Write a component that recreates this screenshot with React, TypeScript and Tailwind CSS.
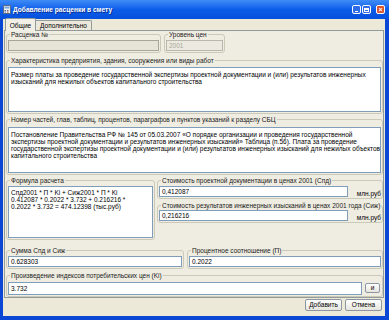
import type { ReactNode } from "react";

function Group({
  label,
  className = "",
  children,
}: {
  label: string;
  className?: string;
  children: ReactNode;
}) {
  return (
    <fieldset
      className={`min-w-0 border border-[#CBCAB8] rounded-[3px] px-px pb-px ${className}`}
    >
      <legend className="ml-[2px] px-px text-[6.5px] leading-[7px] text-[#1a1a1a] whitespace-nowrap">
        {label}
      </legend>
      {children}
    </fieldset>
  );
}

function Field({ value, className = "" }: { value: string; className?: string }) {
  return (
    <div
      className={`h-[11px] bg-white border border-[#7F9DB9] pl-[2px] text-[6.5px] leading-[9px] text-black whitespace-nowrap ${className}`}
    >
      {value}
    </div>
  );
}

function Memo({ lines, className = "" }: { lines: string[]; className?: string }) {
  return (
    <div
      className={`bg-white border border-[#7F9DB9] pl-[2px] text-[6.5px] leading-[7px] text-black ${className}`}
    >
      {lines.map((line) => (
        <div key={line} className="whitespace-nowrap">
          {line}
        </div>
      ))}
    </div>
  );
}

function XpButton({ label, className = "" }: { label: string; className?: string }) {
  return (
    <button
      className={`flex items-center justify-center rounded-[2px] border border-[#8C97A3] bg-gradient-to-b from-white to-[#E6E5DD] text-[6.5px] leading-[8px] text-black ${className}`}
    >
      {label}
    </button>
  );
}

export default function App() {
  return (
    <div className="w-[389px] h-[320px] flex flex-col bg-[#0A47D4] font-['Liberation_Sans',Arial,sans-serif]">
      {/* Title bar */}
      <div className="h-[19px] flex items-center bg-gradient-to-b from-[#3F8CF6] via-[#0C5CE9] to-[#0550DC] pl-[3px] pr-[4px]">
        <svg width="8" height="9" viewBox="0 0 8 9" className="shrink-0">
          <rect x="0.5" y="0.5" width="7" height="8" fill="#E8EEF8" stroke="#5A6E8C" />
          <rect x="1.5" y="1.5" width="5" height="2" fill="#7FA6D8" />
          <rect x="1.5" y="5" width="1.5" height="1" fill="#5A6E8C" />
          <rect x="4" y="5" width="1.5" height="1" fill="#5A6E8C" />
          <rect x="1.5" y="6.5" width="1.5" height="1" fill="#5A6E8C" />
          <rect x="4" y="6.5" width="1.5" height="1" fill="#C04020" />
        </svg>
        <span className="ml-[2px] text-white font-bold text-[6.6px] leading-[8px] whitespace-nowrap [text-shadow:1px_1px_0_#0A2E8A]">
          Добавление расценки в смету
        </span>
        <div className="ml-auto flex items-center">
          <div className="w-[9px] h-[9px] rounded-[2px] border border-white bg-[#2F6BE6] flex items-end justify-start pb-[1px] pl-[2px]">
            <div className="w-[3px] h-px bg-white" />
          </div>
          <div className="ml-[1px] w-[9px] h-[9px] rounded-[2px] border border-white bg-[#2F6BE6] flex items-center justify-center">
            <div className="w-[5px] h-[4px] border border-white border-t-2" />
          </div>
          <div className="ml-[5px] w-[9px] h-[9px] rounded-[2px] border border-white bg-[#D9532C] flex items-center justify-center text-white text-[7px] leading-[7px] font-bold">
            ×
          </div>
        </div>
      </div>

      {/* Window body */}
      <div className="flex-1 ml-[3px] mr-[4px] mb-[4px] bg-[#ECE9D8] flex flex-col">
        {/* Tabs */}
        <div className="h-[11px] flex items-end pl-[2px]">
          <div className="relative z-10 -mb-px h-[13px] w-[31px] border border-b-0 border-[#919B9C] rounded-t-[2px] bg-[#F1EFE6] flex items-center justify-center text-[6.5px] leading-[7px] text-black">
            Общие
          </div>
          <div className="h-[10px] w-[56px] border border-l-0 border-b-0 border-[#919B9C] rounded-tr-[2px] bg-[#ECE9DC] flex items-center justify-center text-[6.5px] leading-[7px] text-black">
            Дополнительно
          </div>
        </div>

        {/* Tab panel */}
        <div className="mx-[1px] h-[268px] border border-[#919B9C] bg-[#EFEDE2] pl-px flex flex-col">
          <div className="flex gap-[3px]">
            <Group label="Расценка №" className="w-[155px]">
              <div className="mt-[2px] h-[11px] border border-[#A7A69A] bg-[#E6E4D7]" />
            </Group>
            <Group label="Уровень цен" className="w-[61px]">
              <div className="mt-[2px] h-[11px] border border-[#B9B8AC] bg-[#ECEAE0] pl-[2px] text-[6.5px] leading-[9px] text-[#A9A79A]">
                2001
              </div>
            </Group>
          </div>

          <Group label="Характеристика предприятия, здания, сооружения или виды работ" className="mt-[4px] w-[377px]">
            <Memo
              className="mt-[3px] h-[45px] pt-[3px]"
              lines={[
                "Размер платы за проведение государственной экспертизы проектной документации и (или) результатов инженерных",
                "изысканий для нежилых объектов капитального строительства",
              ]}
            />
          </Group>

          <Group label="Номер частей, глав, таблиц, процентов, параграфов и пунктов указаний к разделу СБЦ" className="mt-[2px] w-[377px]">
            <Memo
              className="mt-[4px] h-[46px] pt-[3px]"
              lines={[
                "Постановление Правительства РФ № 145 от 05.03.2007 «О порядке организации и проведения государственной",
                "экспертизы проектной документации и результатов инженерных изысканий» Таблица (п.56). Плата за проведение",
                "государственной экспертизы проектной документации и (или) результатов инженерных изысканий для нежилых объектов",
                "капитального строительства",
              ]}
            />
          </Group>

          <div className="mt-[2px] flex gap-[2px] items-start">
            <Group label="Формула расчета" className="w-[149px]">
              <Memo
                className="mt-[2px] h-[52px] pt-[2px]"
                lines={[
                  "Спд2001 * П * Ki + Сиж2001 * П * Ki",
                  "0.412087 * 0.2022 * 3.732 + 0.216216 *",
                  "0.2022 * 3.732 = 474.12398 (тыс.руб)",
                ]}
              />
            </Group>
            <div className="flex flex-col">
              <Group label="Стоимость проектной документации в ценах 2001 (Спд)" className="w-[226px]">
                <div className="mt-[2px] flex items-end">
                  <Field value="0,412087" className="w-[189px]" />
                  <span className="ml-[9px] text-[6.5px] leading-[7px] text-black">млн.руб</span>
                </div>
              </Group>
              <Group label="Стоимость результатов инженерных изысканий в ценах 2001 года (Сиж)" className="mt-[3px] w-[226px]">
                <div className="mt-[1px] flex items-end">
                  <Field value="0,216216" className="w-[189px]" />
                  <span className="ml-[9px] text-[6.5px] leading-[7px] text-black">млн.руб</span>
                </div>
              </Group>
            </div>
          </div>

          <div className="mt-[7px] flex gap-[3px]">
            <Group label="Сумма Спд и Сиж" className="w-[178px]">
              <Field value="0.628303" className="mt-[2px]" />
            </Group>
            <Group label="Процентное соотношение (П)" className="w-[196px]">
              <Field value="0.2022" className="mt-[2px]" />
            </Group>
          </div>

          <Group label="Произведение индексов потребительских цен (Ki)" className="mt-[3px] w-[377px]">
            <div className="mt-[3px] flex items-start gap-[3px]">
              <Field value="3.732" className="w-[354px] h-[13px] leading-[11px]" />
              <XpButton label="и" className="mt-[1px] w-[15px] h-[10px] text-[#1a3a8a]" />
            </div>
          </Group>
        </div>

        {/* Dialog buttons */}
        <div className="mt-[1px] flex justify-end gap-[3px] pr-[3px]">
          <XpButton label="Добавить" className="w-[37px] h-[12px]" />
          <XpButton label="Отмена" className="w-[37px] h-[12px]" />
        </div>
      </div>
    </div>
  );
}
